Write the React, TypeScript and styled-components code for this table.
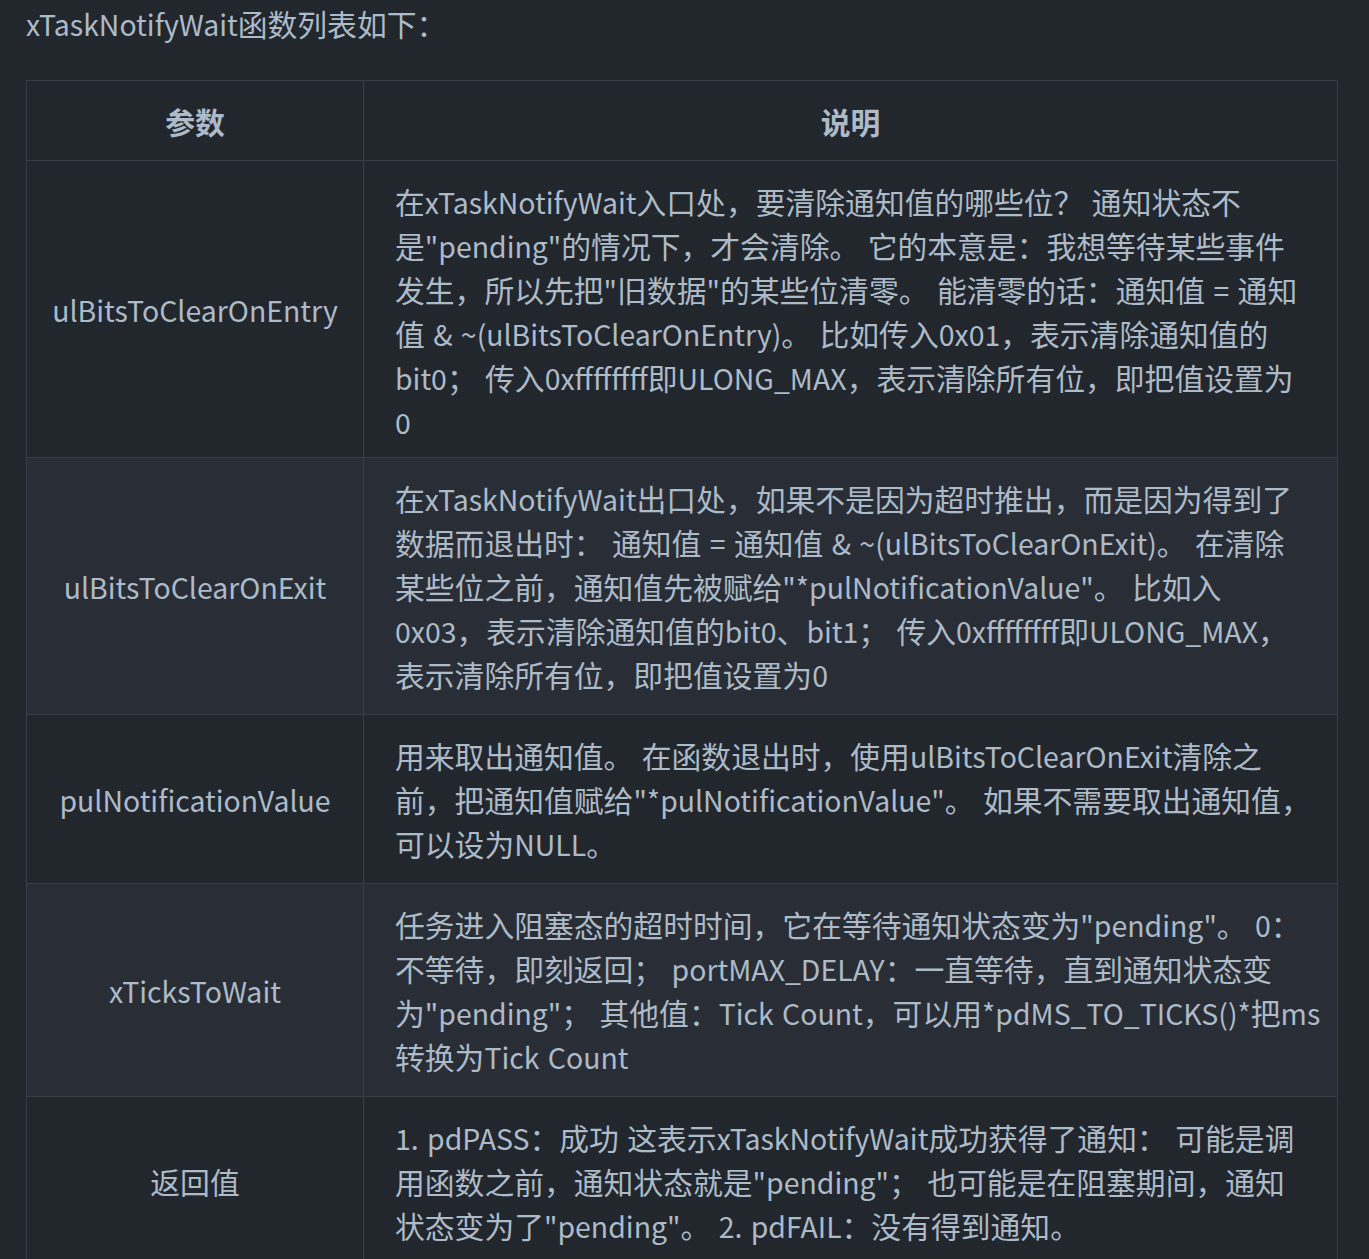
import styled, { createGlobalStyle } from 'styled-components'

interface Param {
  name: string
  lines: string[]
}

const PARAMS: Param[] = [
  {
    name: 'ulBitsToClearOnEntry',
    lines: [
      '在xTaskNotifyWait入口处，要清除通知值的哪些位？ 通知状态不',
      '是"pending"的情况下，才会清除。 它的本意是：我想等待某些事件',
      '发生，所以先把"旧数据"的某些位清零。 能清零的话：通知值 = 通知',
      '值 & ~(ulBitsToClearOnEntry)。 比如传入0x01，表示清除通知值的',
      'bit0； 传入0xffffffff即ULONG_MAX，表示清除所有位，即把值设置为',
      '0',
    ],
  },
  {
    name: 'ulBitsToClearOnExit',
    lines: [
      '在xTaskNotifyWait出口处，如果不是因为超时推出，而是因为得到了',
      '数据而退出时： 通知值 = 通知值 & ~(ulBitsToClearOnExit)。 在清除',
      '某些位之前，通知值先被赋给"*pulNotificationValue"。 比如入',
      '0x03，表示清除通知值的bit0、bit1； 传入0xffffffff即ULONG_MAX，',
      '表示清除所有位，即把值设置为0',
    ],
  },
  {
    name: 'pulNotificationValue',
    lines: [
      '用来取出通知值。 在函数退出时，使用ulBitsToClearOnExit清除之',
      '前，把通知值赋给"*pulNotificationValue"。 如果不需要取出通知值，',
      '可以设为NULL。',
    ],
  },
  {
    name: 'xTicksToWait',
    lines: [
      '任务进入阻塞态的超时时间，它在等待通知状态变为"pending"。 0：',
      '不等待，即刻返回； portMAX_DELAY：一直等待，直到通知状态变',
      '为"pending"； 其他值：Tick Count，可以用*pdMS_TO_TICKS()*把ms',
      '转换为Tick Count',
    ],
  },
  {
    name: '返回值',
    lines: [
      '1. pdPASS：成功 这表示xTaskNotifyWait成功获得了通知： 可能是调',
      '用函数之前，通知状态就是"pending"； 也可能是在阻塞期间，通知',
      '状态变为了"pending"。 2. pdFAIL：没有得到通知。',
    ],
  },
]

const CJK = /[\u3000-\u303f\u4e00-\u9fff\uff00-\uffef]/

// the original's latin glyphs are narrower than the CJK font's, so shrink ascii runs a bit
function Mixed({ text }: { text: string }) {
  const parts = text.match(/[\x20-\x7e]+|[^\x20-\x7e]+/g) ?? []
  return (
    <>
      {parts.map((p, i) =>
        /^[\x20-\x7e]+$/.test(p) ? <Latin key={i}>{p}</Latin> : <span key={i}>{p}</span>
      )}
    </>
  )
}

export default function App() {
  return (
    <>
      <GlobalStyle />
      <Page>
        <Intro>
          <Mixed text="xTaskNotifyWait函数列表如下：" />
        </Intro>
        <Table>
          <thead>
            <tr>
              <HeadCell $width="337px">参数</HeadCell>
              <HeadCell>说明</HeadCell>
            </tr>
          </thead>
          <tbody>
            {PARAMS.map((p) => (
              <Row key={p.name}>
                <NameCell>
                  <Mixed text={p.name} />
                </NameCell>
                <DescCell>
                  {p.lines.map((line, i) => (
                    <Line key={i} $short={!CJK.test(line)}>
                      <Mixed text={line} />
                    </Line>
                  ))}
                </DescCell>
              </Row>
            ))}
          </tbody>
        </Table>
      </Page>
    </>
  )
}

const GlobalStyle = createGlobalStyle`
  html, body {
    margin: 0;
    padding: 0;
    background: #22272e;
    overflow: hidden;
  }
  body {
    font-family: "Noto Sans CJK SC", "Noto Sans", sans-serif;
    color: #adbac7;
  }
`

const Page = styled.div`
  padding: 1px 31px 0 26px;
  font-size: 29.8px;
  line-height: 44px;
`

const Intro = styled.p`
  margin: 0 0 34px;
`

const Latin = styled.span`
  font-size: 0.955em;
  word-spacing: 2px;
`

const Table = styled.table`
  width: 1312px;
  table-layout: fixed;
  border-collapse: collapse;
  border-spacing: 0;
`

const Row = styled.tr`
  background: #22272e;

  &:nth-child(2n) {
    background: #292e36;
  }
`

const HeadCell = styled.th<{ $width?: string }>`
  width: ${({ $width }) => $width ?? 'auto'};
  height: 80px;
  box-sizing: border-box;
  padding: 0 31px;
  border: 1px solid #373e47;
  font-weight: 700;
  text-align: center;
`

const NameCell = styled.td`
  padding: 18px 10px;
  border: 1px solid #373e47;
  text-align: center;
  vertical-align: middle;
  white-space: nowrap;
`

const DescCell = styled.td`
  padding: 18px 31px 18px 31px;
  border: 1px solid #373e47;
  text-align: left;
`

const Line = styled.div<{ $short: boolean }>`
  height: ${({ $short }) => ($short ? '40px' : '44px')};
  white-space: nowrap;
`
